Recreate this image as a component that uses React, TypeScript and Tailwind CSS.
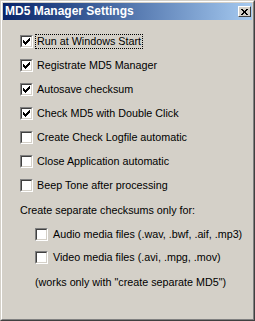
import React from 'react'

const font = { fontFamily: '"Liberation Sans", Arial, sans-serif' }

function CheckMark() {
  // classic 7x7 pixel tick
  const px = [
    [6, 0],
    [5, 1], [6, 1],
    [0, 2], [4, 2], [5, 2], [6, 2],
    [0, 3], [1, 3], [3, 3], [4, 3], [5, 3],
    [0, 4], [1, 4], [2, 4], [3, 4], [4, 4],
    [1, 5], [2, 5], [3, 5],
    [2, 6],
  ]
  return (
    <svg width="7" height="7" viewBox="0 0 7 7" shapeRendering="crispEdges">
      {px.map(([x, y]) => (
        <rect key={`${x}-${y}`} x={x} y={y} width="1" height="1" fill="#000" />
      ))}
    </svg>
  )
}

function Box({ checked }: { checked?: boolean }) {
  return (
    <div className="w-[13px] h-[13px] shrink-0 border border-t-[#808080] border-l-[#808080] border-b-white border-r-white">
      <div className="w-full h-full border border-t-[#404040] border-l-[#404040] border-b-[#D4D0C8] border-r-[#D4D0C8] bg-white flex items-center justify-center">
        {checked && <CheckMark />}
      </div>
    </div>
  )
}

function Row({ label, checked, focused, gap = 'ml-[4px]' }: { label: string; checked?: boolean; focused?: boolean; gap?: string }) {
  return (
    <div className="flex items-center h-[13px]">
      <Box checked={checked} />
      {focused ? (
        <span className="ml-[2px] px-[1px] leading-[13px] border border-dotted border-black whitespace-nowrap">{label}</span>
      ) : (
        <span className={`${gap} leading-[13px] whitespace-nowrap`}>{label}</span>
      )}
    </div>
  )
}

export default function App() {
  return (
    <div
      style={font}
      className="w-[255px] h-[321px] bg-[#D4D0C8] border border-t-[#D4D0C8] border-l-[#D4D0C8] border-r-[#404040] border-b-[#404040] text-[10.75px] text-black"
    >
      <div className="w-full h-full border border-t-white border-l-white border-r-[#808080] border-b-[#808080] p-[1px] flex flex-col">
        <div className="h-[17px] shrink-0 flex items-center justify-between bg-gradient-to-r from-[#0A246A] to-[#A6CAF0]">
          <span className="pl-[2px] text-white font-bold text-[12px] leading-[17px] whitespace-nowrap">
            MD5 Manager Settings
          </span>
          <div className="mr-[1px] w-[13px] h-[11px] border border-t-white border-l-white border-r-[#404040] border-b-[#404040] bg-[#D4D0C8] flex items-center justify-center">
            <svg width="7" height="6" viewBox="0 0 7 6" shapeRendering="crispEdges">
              <path d="M0 0h2v1H0zM5 0h2v1H5zM1 1h2v1H1zM4 1h2v1H4zM2 2h3v1H2zM2 3h3v1H2zM1 4h2v1H1zM4 4h2v1H4zM0 5h2v1H0zM5 5h2v1H5z" fill="#000" />
            </svg>
          </div>
        </div>

        <div className="pl-[17px] pt-[15px] flex flex-col">
          <div className="flex flex-col gap-[11px]">
            <Row label="Run at Windows Start" checked focused />
            <Row label="Registrate MD5 Manager" checked />
            <Row label="Autosave checksum" checked />
            <Row label="Check MD5 with Double Click" checked />
            <Row label="Create Check Logfile automatic" />
            <Row label="Close Application automatic" />
            <Row label="Beep Tone after processing" />
          </div>

          <p className="mt-[12px] leading-[13px] whitespace-nowrap">Create separate checksums only for:</p>

          <div className="pl-[15px] mt-[11px] flex flex-col gap-[10px]">
            <Row label="Audio media files (.wav, .bwf, .aif, .mp3)" gap="ml-[5px]" />
            <Row label="Video media files (.avi, .mpg, .mov)" gap="ml-[5px]" />
          </div>

          <p className="pl-[15px] mt-[12px] leading-[13px] whitespace-nowrap">(works only with "create separate MD5")</p>
        </div>
      </div>
    </div>
  )
}
